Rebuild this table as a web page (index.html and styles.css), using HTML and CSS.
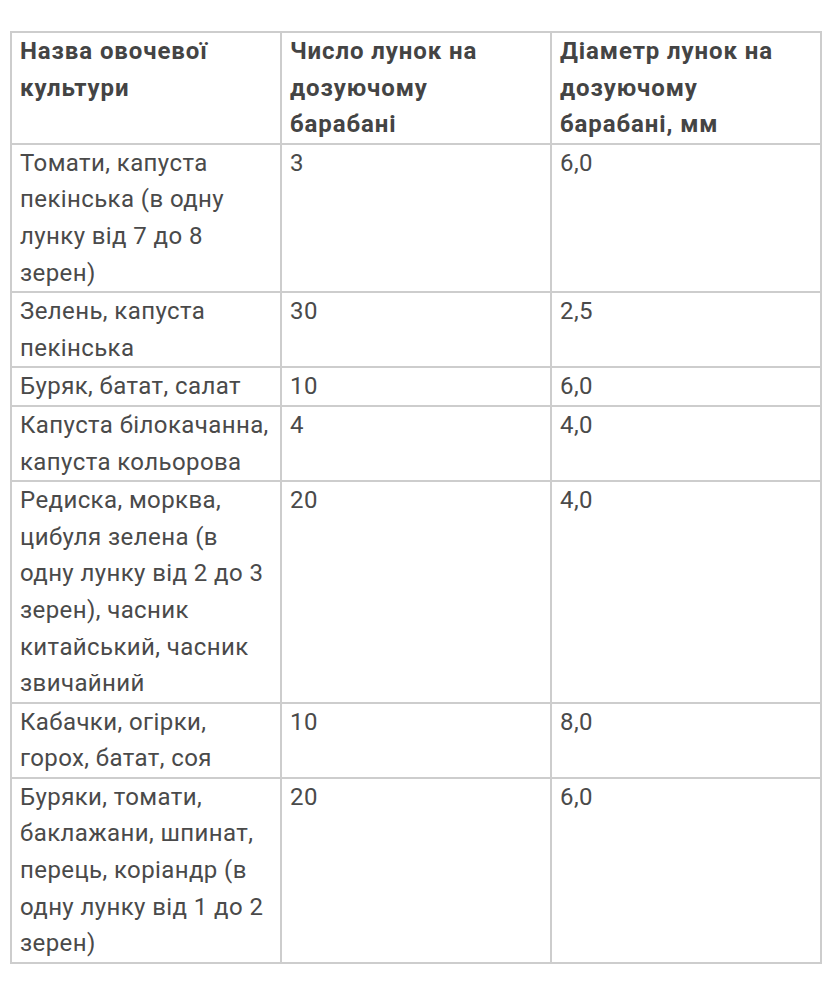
FILE: index.html
```html
<!DOCTYPE html>
<html lang="uk">
<head>
<meta charset="utf-8">
<link rel="stylesheet" href="styles.css">
</head>
<body>
<table class="seed-table">
  <colgroup><col class="c"><col class="c"><col class="c"></colgroup>
  <thead>
    <tr>
      <th>Назва овочевої культури</th>
      <th>Число лунок на дозуючому барабані</th>
      <th>Діаметр лунок на дозуючому барабані, мм</th>
    </tr>
  </thead>
  <tbody>
    <tr><td>Томати, капуста пекінська (в одну лунку від 7 до 8 зерен)</td><td>3</td><td>6,0</td></tr>
    <tr><td>Зелень, капуста пекінська</td><td>30</td><td>2,5</td></tr>
    <tr><td>Буряк, батат, салат</td><td>10</td><td>6,0</td></tr>
    <tr><td>Капуста білокачанна, капуста кольорова</td><td>4</td><td>4,0</td></tr>
    <tr><td>Редиска, морква, цибуля зелена (в одну лунку від 2 до 3 зерен), часник китайський, часник звичайний</td><td>20</td><td>4,0</td></tr>
    <tr><td>Кабачки, огірки, горох, батат, соя</td><td>10</td><td>8,0</td></tr>
    <tr><td>Буряки, томати, баклажани, шпинат, перець, коріандр (в одну лунку від 1 до 2 зерен)</td><td>20</td><td>6,0</td></tr>
  </tbody>
</table>
</body>
</html>
```
FILE: styles.css
```css
html, body {
  margin: 0;
  padding: 0;
  background: #ffffff;
}
body {
  padding: 31px 0 0 10px;
  font-family: Roboto, "Liberation Sans", sans-serif;
}
.seed-table {
  border-collapse: collapse;
  table-layout: fixed;
  width: 812px;
  color: #4a4a4a;
  font-size: 24px;
  line-height: 36.6px;
  letter-spacing: 0.4px;
}
.seed-table .c {
  width: 270px;
}
.seed-table th,
.seed-table td {
  border: 2px solid #cdcdcd;
  padding: 0 8px 0 8px;
  text-align: left;
  vertical-align: top;
}
.seed-table th {
  font-weight: 700;
  color: #444444;
  letter-spacing: 0.9px;
  padding-right: 14px;
}
```
